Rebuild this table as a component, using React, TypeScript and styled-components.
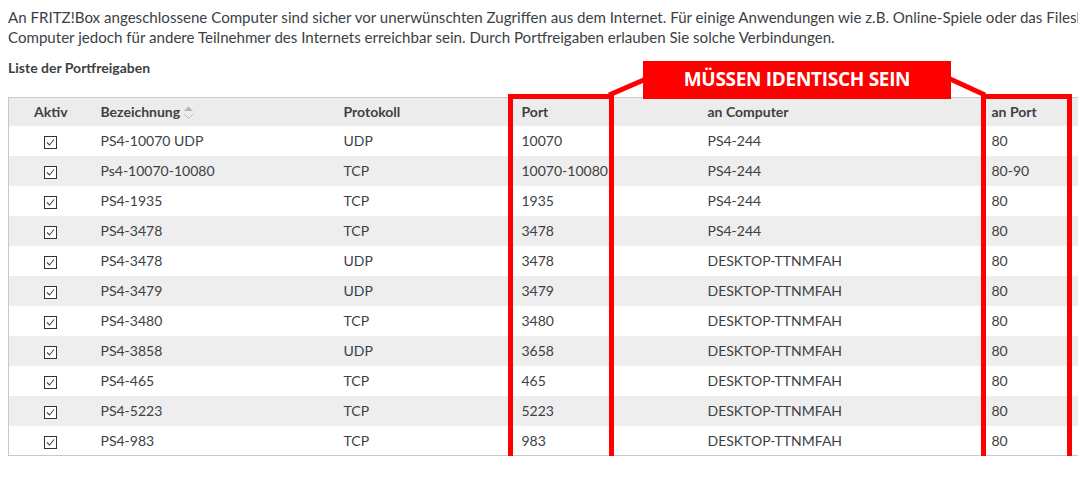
import styled, { createGlobalStyle } from 'styled-components';

const GlobalStyle = createGlobalStyle`
	html, body {
		margin: 0;
		padding: 0;
		background: #fff;
		overflow: hidden;
	}
	body {
		font-family: Lato, 'Liberation Sans', sans-serif;
		color: #3c3f45;
	}
`;

const Page = styled.div`
	position: relative;
	width: 1120px;
	padding: 8px 8px 0;
`;

const Intro = styled.p`
	margin: 0;
	font-size: 15.1px;
	line-height: 19.5px;
	white-space: nowrap;
`;

const Heading = styled.h3`
	margin: 11px 0 0;
	font-size: 14px;
	line-height: 20px;
	font-weight: 700;
`;

const Table = styled.table`
	margin-top: 19px;
	width: 1110px;
	border-collapse: collapse;
	border-top: 1px solid #c9c9c9;
	border-left: 1px solid #c9c9c9;
	border-bottom: 1px solid #c9c9c9;
	table-layout: fixed;
	font-size: 14px;
`;

const HeadRow = styled.tr`
	height: 28px;
	background: #ececec;
`;

const Th = styled.th<{ $center?: boolean }>`
	padding: 0 8px;
	text-align: ${(p) => (p.$center ? 'center' : 'left')};
	font-weight: 700;
	white-space: nowrap;
`;

const Row = styled.tr<{ $alt: boolean }>`
	height: 30px;
	background: ${(p) => (p.$alt ? '#eeeeee' : '#ffffff')};
`;

const Td = styled.td<{ $center?: boolean }>`
	padding: 0 8px;
	text-align: ${(p) => (p.$center ? 'center' : 'left')};
	white-space: nowrap;
`;

const SortIcon = styled.svg`
	vertical-align: -3px;
	margin-left: 3px;
`;

const CheckBox = styled.svg`
	display: inline-block;
	vertical-align: middle;
`;

const Frame = styled.div<{ $left: number; $width: number }>`
	position: absolute;
	left: ${(p) => p.$left}px;
	top: 94px;
	width: ${(p) => p.$width}px;
	height: 367px;
	box-sizing: border-box;
	border: 5px solid #ff0000;
	pointer-events: none;
`;

const Label = styled.div`
	position: absolute;
	left: 643px;
	top: 61px;
	width: 308px;
	height: 38px;
	background: #ff0000;
	color: #fff;
	font-family: 'Open Sans', Lato, sans-serif;
	font-weight: 700;
	font-size: 19px;
	line-height: 36px;
	text-align: center;
	letter-spacing: -0.3px;
`;

const Connectors = styled.svg`
	position: absolute;
	left: 0;
	top: 0;
	pointer-events: none;
`;

const rows = [
	['PS4-10070 UDP', 'UDP', '10070', 'PS4-244', '80'],
	['Ps4-10070-10080', 'TCP', '10070-10080', 'PS4-244', '80-90'],
	['PS4-1935', 'TCP', '1935', 'PS4-244', '80'],
	['PS4-3478', 'TCP', '3478', 'PS4-244', '80'],
	['PS4-3478', 'UDP', '3478', 'DESKTOP-TTNMFAH', '80'],
	['PS4-3479', 'UDP', '3479', 'DESKTOP-TTNMFAH', '80'],
	['PS4-3480', 'TCP', '3480', 'DESKTOP-TTNMFAH', '80'],
	['PS4-3858', 'UDP', '3658', 'DESKTOP-TTNMFAH', '80'],
	['PS4-465', 'TCP', '465', 'DESKTOP-TTNMFAH', '80'],
	['PS4-5223', 'TCP', '5223', 'DESKTOP-TTNMFAH', '80'],
	['PS4-983', 'TCP', '983', 'DESKTOP-TTNMFAH', '80'],
];

const Check = () => (
	<CheckBox width='13' height='13' viewBox='0 0 13 13'>
		<rect x='0.5' y='0.5' width='12' height='12' fill='#fff' stroke='#333' />
		<path d='M3 6.5 L5.5 9 L10 3.5' fill='none' stroke='#444' strokeWidth='1.1' />
	</CheckBox>
);

const App = () => {
	return (
		<Page>
			<GlobalStyle />
			<Intro>
				An FRITZ!Box angeschlossene Computer sind sicher vor unerwünschten Zugriffen aus dem Internet. Für einige
				Anwendungen wie z.B. Online-Spiele oder das Filesharing-Programm eMule müssen Ihre
				<br />
				Computer jedoch für andere Teilnehmer des Internets erreichbar sein. Durch Portfreigaben erlauben Sie solche
				Verbindungen.
			</Intro>
			<Heading>Liste der Portfreigaben</Heading>
			<Table>
				<colgroup>
					<col style={{ width: 84 }} />
					<col style={{ width: 243 }} />
					<col style={{ width: 178 }} />
					<col style={{ width: 186 }} />
					<col style={{ width: 284 }} />
					<col />
				</colgroup>
				<thead>
					<HeadRow>
						<Th $center>Aktiv</Th>
						<Th>
							Bezeichnung
							<SortIcon width='11' height='15' viewBox='0 0 11 15'>
								<path d='M1 6 L5.5 1.5 L10 6 Z' fill='#b5b5b5' />
								<path d='M1 9 L5.5 13.5 L10 9' fill='none' stroke='#bdbdbd' strokeWidth='1' />
							</SortIcon>
						</Th>
						<Th>Protokoll</Th>
						<Th>Port</Th>
						<Th>an Computer</Th>
						<Th>an Port</Th>
					</HeadRow>
				</thead>
				<tbody>
					{rows.map((r, i) => (
						<Row key={i} $alt={i % 2 === 1}>
							<Td $center>
								<Check />
							</Td>
							{r.map((c, j) => (
								<Td key={j}>{c}</Td>
							))}
						</Row>
					))}
				</tbody>
			</Table>

			<Frame $left={508} $width={106} />
			<Frame $left={981} $width={91} />
			<Connectors width='1078' height='120'>
				<path d='M609 95 L646 79' stroke='#ff0000' strokeWidth='5' />
				<path d='M948 78 L985 95' stroke='#ff0000' strokeWidth='5' />
			</Connectors>
			<Label>MÜSSEN IDENTISCH SEIN</Label>
		</Page>
	);
};

export default App;
